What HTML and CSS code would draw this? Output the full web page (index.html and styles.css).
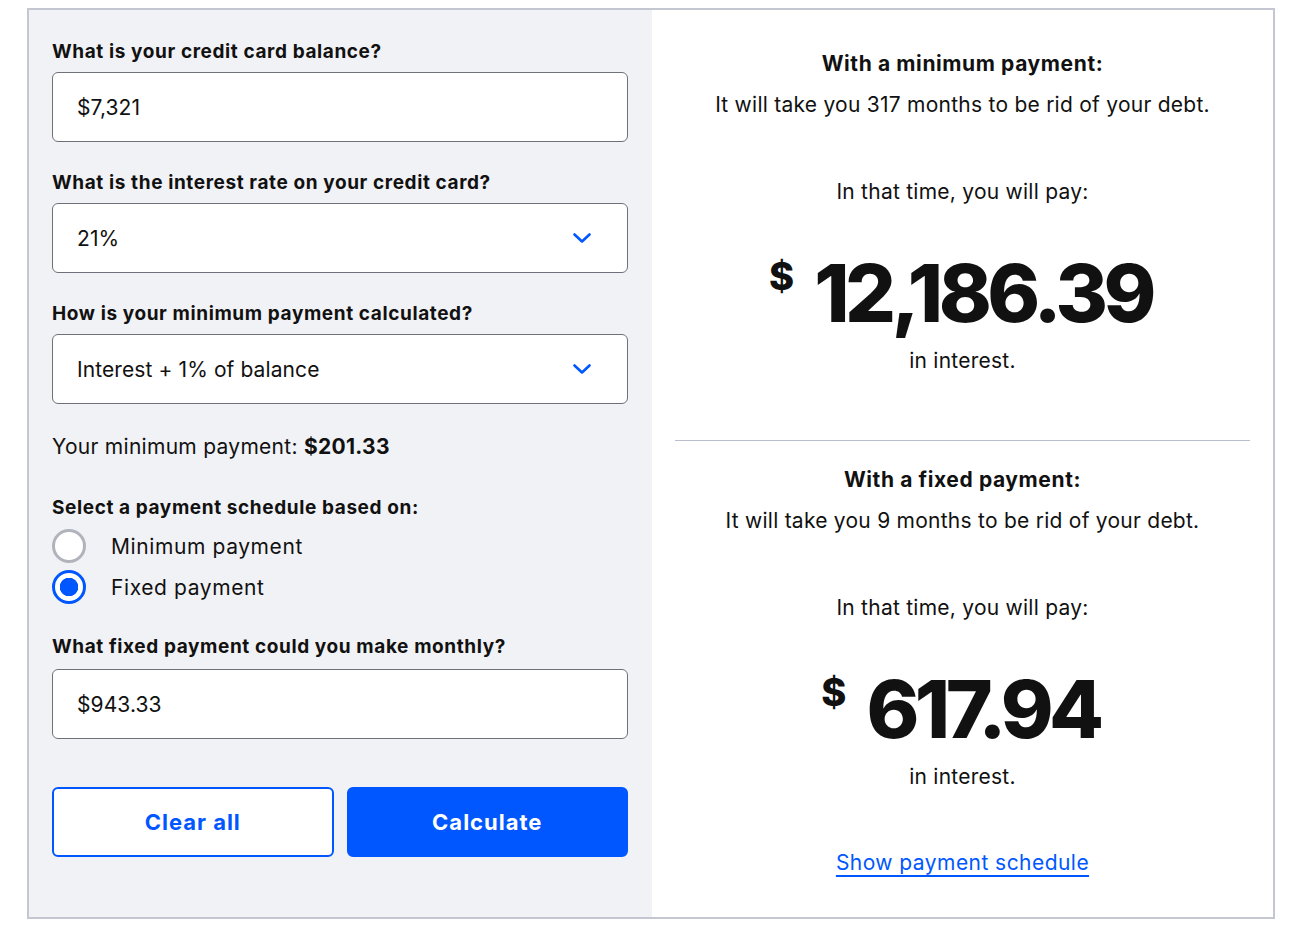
FILE: index.html
```html
<!DOCTYPE html>
<html lang="en">
<head>
<meta charset="utf-8">
<title>Credit card payoff calculator</title>
<link rel="stylesheet" href="styles.css">
</head>
<body>
<div class="calc">
  <form class="form">
    <div class="field">
      <label class="label">What is your credit card balance?</label>
      <div class="input">$7,321</div>
    </div>
    <div class="field">
      <label class="label">What is the interest rate on your credit card?</label>
      <div class="input select">
        <span>21%</span>
        <svg class="chev" width="20" height="12" viewBox="0 0 20 12"><path d="M2.5 2.5 L10 9.5 L17.5 2.5" fill="none" stroke="#0157ff" stroke-width="2.6" stroke-linecap="round" stroke-linejoin="round"/></svg>
      </div>
    </div>
    <div class="field">
      <label class="label">How is your minimum payment calculated?</label>
      <div class="input select">
        <span>Interest + 1% of balance</span>
        <svg class="chev" width="20" height="12" viewBox="0 0 20 12"><path d="M2.5 2.5 L10 9.5 L17.5 2.5" fill="none" stroke="#0157ff" stroke-width="2.6" stroke-linecap="round" stroke-linejoin="round"/></svg>
      </div>
    </div>
    <p class="minpay">Your minimum payment: <strong>$201.33</strong></p>
    <div class="schedule">
      <p class="label">Select a payment schedule based on:</p>
      <div class="radio"><span class="dot"></span><span>Minimum payment</span></div>
      <div class="radio checked"><span class="dot"></span><span>Fixed payment</span></div>
    </div>
    <div class="field field-fixed">
      <label class="label">What fixed payment could you make monthly?</label>
      <div class="input">$943.33</div>
    </div>
    <div class="buttons">
      <button type="button" class="btn outline">Clear all</button>
      <button type="button" class="btn solid">Calculate</button>
    </div>
  </form>
  <section class="results">
    <div class="result">
      <h3 class="r-title">With a minimum payment:</h3>
      <p class="r-line">It will take you 317 months to be rid of your debt.</p>
      <p class="r-pay">In that time, you will pay:</p>
      <div class="amount"><span class="cur">$</span><span class="num">12,186.39</span></div>
      <p class="r-int">in interest.</p>
    </div>
    <hr class="divider">
    <div class="result">
      <h3 class="r-title">With a fixed payment:</h3>
      <p class="r-line">It will take you 9 months to be rid of your debt.</p>
      <p class="r-pay">In that time, you will pay:</p>
      <div class="amount"><span class="cur">$</span><span class="num">617.94</span></div>
      <p class="r-int">in interest.</p>
    </div>
    <a class="link" href="#">Show payment schedule</a>
  </section>
</div>
</body>
</html>
```
FILE: styles.css
```css
* { box-sizing: border-box; }
html, body { margin: 0; padding: 0; background: #fff; }
body {
  font-family: Inter, "Noto Sans", "Liberation Sans", sans-serif;
  color: #111;
  padding: 8px 0 0 27px;
}
.calc {
  width: 1248px;
  height: 911px;
  border: 2px solid #c4c7d2;
  display: flex;
}
.form {
  width: 623px;
  background: #f1f2f6;
  padding: 30px 24px 0 23px;
  margin: 0;
}
.field { margin-bottom: 29px; }
.label {
  display: block;
  font-size: 19px;
  font-weight: 700;
  line-height: 24px;
  margin: 0 0 8px 0;
  letter-spacing: 0.6px;
}
.field-fixed .label { margin-bottom: 10px; }
.input {
  height: 70px;
  background: #fff;
  border: 1.5px solid #6f717a;
  border-radius: 6px;
  display: flex;
  align-items: center;
  padding: 0 24px;
  font-size: 21px;
  letter-spacing: 0.1px;
}
.select { justify-content: space-between; padding-right: 35px; }
.chev { display: block; }
.minpay {
  margin: 0 0 35px 0;
  font-size: 21px;
  line-height: 28px;
  letter-spacing: 0.28px;
}
.minpay strong { font-weight: 700; }
.schedule { margin-bottom: 31px; }
.schedule .label { margin-bottom: 9px; }
.radio {
  display: flex;
  align-items: center;
  gap: 25px;
  font-size: 21px;
  height: 34px;
  margin-bottom: 7px;
  letter-spacing: 0.6px;
}
.radio:last-child { margin-bottom: 0; }
.dot {
  width: 34px;
  height: 34px;
  border-radius: 50%;
  border: 3px solid #b1b3bc;
  background: #fff;
  flex: none;
}
.checked .dot {
  border-color: #0157ff;
  background: radial-gradient(circle, #0157ff 0 9px, #fff 9.5px);
}
.buttons {
  display: flex;
  gap: 13px;
  margin-top: 48px;
}
.btn {
  flex: 1;
  height: 70px;
  border-radius: 6px;
  font-family: inherit;
  font-size: 22px;
  font-weight: 700;
  letter-spacing: 1px;
  cursor: pointer;
}
.outline { background: #fff; color: #0157ff; border: 2px solid #0157ff; }
.solid { background: #0157ff; color: #fff; border: 2px solid #0157ff; }
.results {
  flex: 1;
  text-align: center;
  padding: 40px 23px 0 23px;
}
.result p, .result h3 { margin: 0; }
.r-title { font-size: 21px; font-weight: 700; line-height: 28px; letter-spacing: 0.6px; }
.r-line { font-size: 21px; line-height: 28px; margin-top: 13px !important; letter-spacing: 0.25px; }
.r-pay { font-size: 21px; line-height: 28px; margin-top: 59px !important; letter-spacing: 0.25px; }
.amount {
  display: flex;
  justify-content: center;
  align-items: flex-start;
  margin-top: 37px;
  height: 100px;
  line-height: 100px;
}
.cur {
  font-size: 38px;
  font-weight: 800;
  line-height: 38px;
  margin-top: 14px;
  margin-right: 20px;
}
.num {
  font-size: 80px;
  font-weight: 800;
  letter-spacing: -4.5px;
  margin-right: 4px;
}
.r-int { font-size: 21px; line-height: 28px; margin-top: 4px !important; letter-spacing: 0.25px; }
.divider {
  border: none;
  border-top: 1.5px solid #b9bdcc;
  margin: 65px 0 25px 0;
}
.link {
  display: inline-block;
  margin-top: 58px;
  font-size: 21px;
  line-height: 28px;
  color: #0157ff;
  text-decoration: underline;
  text-decoration-thickness: 2px;
  text-underline-offset: 5px;
  letter-spacing: 0.45px;
}
```
